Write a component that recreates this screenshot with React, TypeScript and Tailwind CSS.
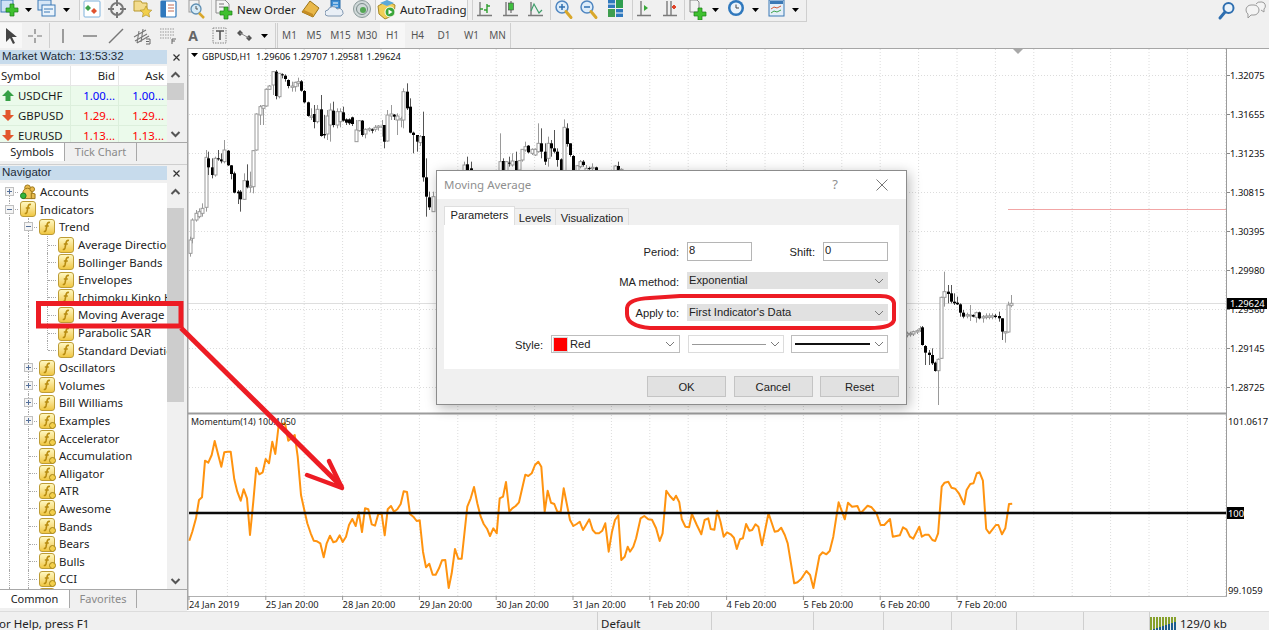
import React from "react";

type C = [number, number, number, number, number, number];

const seg6: C[] = [
  [14,590,600,640,650,0],[22,535,540,595,610,0],[32,510,520,540,545,0],[42,505,515,530,535,0],[52,490,505,520,530,0],[62,330,352,502,515,0],[70,335,355,382,405,1],[80,355,382,405,415,1],[90,350,355,405,410,0],[100,330,355,358,362,1],[109,340,358,364,370,1],[118,300,330,365,370,0],[128,330,332,376,378,1],[138,375,376,402,418,1],[148,395,400,458,460,1],[158,450,455,460,492,1],[166,450,455,478,515,1],[176,400,422,478,480,0],[186,373,422,442,445,1],[196,395,438,442,458,0],[205,330,332,440,460,0],[214,220,222,330,332,0],[224,195,200,225,255,0],[234,195,197,205,255,0],[244,145,148,198,200,0],[253,135,138,148,150,0],[263,95,95,135,165,0],[272,90,95,168,178,1],[281,100,100,170,175,0],[291,100,103,106,115,1],[300,103,107,117,125,1],[310,118,120,138,145,1],[320,125,138,142,155,0],[329,125,127,140,155,0],[340,113,125,130,140,0],[348,120,124,152,155,1],[358,150,153,187,190,1],[368,185,187,228,230,1],[378,205,228,232,240,0],[387,195,222,246,265,1],[397,195,208,245,250,0],[407,165,208,288,290,1],[417,225,282,286,295,1],[427,210,228,282,300,0],[436,190,210,255,305,0],[445,185,212,255,262,1],[455,205,215,255,265,0],[464,205,215,245,262,0],[474,200,217,242,245,1],[483,235,238,248,255,1],[492,235,238,250,255,1],[502,230,232,252,258,1],[512,240,270,305,305,0],[521,240,242,272,275,0],[531,240,242,285,290,1],[541,265,268,282,295,0],[551,262,266,270,275,0],[561,265,268,272,280,1],[570,255,262,268,275,0],[580,255,258,262,272,0],[590,240,258,262,290,0],[598,255,255,305,325,1],[607,210,225,303,305,0],[617,195,222,228,240,0],[627,222,224,230,240,1],[637,220,228,240,285,0],[647,230,236,240,262,0],[655,145,155,240,265,0],[665,130,155,205,210,1],[675,175,200,278,280,1],[685,275,278,285,340,1],[695,285,285,305,335,1],[704,285,290,308,318,0],[714,215,288,412,425,1],[723,355,412,470,530,1],[733,455,472,502,510,1],[743,455,470,515,515,0],
];
const seg10: C[] = [
  [102,155,165,185,185,0],[112,140,163,180,185,1],[122,155,175,185,185,1],[209,70,155,185,185,0],[219,145,153,185,185,1],[228,155,155,185,185,0],[238,140,158,161,170,1],[247,130,153,165,170,0],[257,125,153,180,180,1],[266,150,152,180,180,0],[276,118,118,150,155,0],[286,95,110,120,125,0],[295,105,107,127,130,1],[305,115,118,130,135,0],[315,115,118,135,138,0],[325,40,100,125,128,0],[334,55,100,125,145,1],[344,100,125,155,165,1],[353,80,100,145,170,0],[363,90,100,115,140,1],[373,60,115,125,130,1],[382,115,125,150,170,1],[392,145,148,185,185,1],[401,28,52,185,185,0],[411,40,55,102,110,1],[420,100,100,135,140,1],[430,135,138,180,185,1],[440,165,167,185,185,0],[449,150,155,170,175,0],[459,150,155,165,170,1],[468,165,175,185,185,0],[478,170,174,177,185,1],[487,160,172,176,185,0],[497,170,172,185,185,1],[545,180,182,185,185,0],[555,165,168,185,185,0],[564,155,168,185,185,1],[573,175,178,185,185,0],
];
const seg9: C[] = [
  [20,875,880,885,892,0],[30,875,880,884,890,0],[40,872,875,882,888,0],[50,868,872,876,882,0],[60,858,866,870,876,0],[67,858,862,915,917,1],[76,915,918,938,975,1],[86,930,938,945,975,1],[95,925,945,970,975,1],[105,965,968,993,995,1],[115,955,958,992,1095,0],[124,770,772,955,957,0],[133,695,755,772,800,0],[143,735,755,762,790,1],[152,735,760,785,790,1],[162,760,785,790,795,1],[172,770,788,793,795,1],[181,790,793,818,830,1],[190,810,818,830,835,1],[200,818,824,828,835,0],[210,795,825,828,843,0],[220,823,825,830,832,1],[229,815,818,832,848,0],[238,815,817,835,838,1],[248,825,830,834,848,0],[258,820,828,832,838,0],[267,820,828,832,838,0],[276,820,827,831,838,0],[286,822,827,831,835,1],[296,815,828,835,845,1],[305,835,835,875,900,1],[315,875,875,879,908,0],[324,785,795,876,878,0],[334,765,790,796,802,0],
];

const p7: [number, number][] = [[13,392],[22,365],[33,325],[42,270],[51,262],[60,152],[70,158],[80,135],[89,93],[99,132],[109,170],[118,127],[128,125],[137,125],[148,208],[157,245],[167,272],[176,238],[186,265],[195,375],[205,275],[214,173],[223,193],[233,187],[242,147],[252,160],[262,95],[271,132],[281,45],[300,40],[310,92],[320,85],[329,75],[338,140],[348,255],[358,300],[367,340],[377,370],[386,392],[396,394],[406,400],[416,442],[425,400],[435,377],[445,397],[454,394],[464,376],[473,396],[483,380],[492,345],[502,327],[512,348],[521,307],[531,366],[540,295],[550,298],[560,343],[570,347],[580,312],[590,312],[599,376],[608,298],[618,288],[627,305],[637,298],[647,282],[656,244],[666,246],[675,312],[685,320],[695,333],[704,331],[714,425],[723,472],[733,461],[743,494],[752,494],[762,475],[771,451],[781,450],[791,534],[800,490],[810,417],[820,446],[830,446],[847,290],[857,265],[867,231],[877,280],[887,320],[896,342],[906,356],[915,378],[925,355],[935,370],[944,265],[954,260],[963,216],[973,305],[982,295],[992,288],[1002,277],[1021,194],[1030,198],[1040,190],[1050,165],[1060,155],[1069,170],[1079,305],[1088,242],[1098,278],[1108,282],[1117,305],[1127,305],[1136,235],[1155,330],[1165,348],[1175,342],[1184,335],[1194,360],[1203,345],[1213,328],[1223,360],[1232,370],[1242,370],[1252,362],[1261,340],[1271,425],[1281,365],[1290,330],[1300,316],[1309,450],[1319,440],[1328,410]];
const p8: [number, number][] = [[0,425],[8,410],[15,385],[26,325],[35,318],[45,328],[54,329],[64,355],[73,393],[80,370],[89,242],[98,258],[107,270],[113,257],[121,277],[127,328],[136,350],[145,352],[152,312],[164,345],[175,373],[183,330],[192,325],[198,357],[207,359],[214,302],[222,335],[230,380],[238,367],[247,373],[255,383],[262,417],[270,388],[277,385],[285,342],[293,362],[300,360],[308,343],[315,350],[324,406],[340,310],[355,365],[363,363],[371,353],[380,375],[387,400],[403,520],[411,517],[420,507],[433,483],[442,495],[450,534],[465,437],[473,427],[482,433],[490,423],[499,380],[512,277],[527,328],[535,278],[545,290],[558,288],[566,310],[583,287],[593,292],[605,310],[615,345],[624,345],[638,327],[645,380],[662,376],[670,352],[678,358],[687,380],[695,386],[710,350],[716,380],[725,374],[733,374],[742,390],[749,393],[756,370],[765,230],[772,218],[781,215],[789,233],[798,236],[807,250],[820,283],[826,240],[835,222],[843,220],[851,190],[858,187],[866,212],[874,357],[882,370],[898,345],[904,345],[913,373],[921,355],[930,282],[938,281]];

const momentum = [
  ...p7.map(([x, y]) => `${(185 + x / 3).toFixed(1)},${(410 + y / 3).toFixed(1)}`),
  ...p8.map(([x, y]) => `${(630 + x / 2.454).toFixed(1)},${(410 + y / 3).toFixed(1)}`),
].join(" ");

const prices: [number, string][] = [[75,"1.32075"],[114,"1.31655"],[153,"1.31235"],[192,"1.30815"],[231,"1.30395"],[270,"1.29980"],[309,"1.29560"],[348,"1.29145"],[387,"1.28725"]];
const dates = ["24 Jan 2019","25 Jan 20:00","28 Jan 20:00","29 Jan 20:00","30 Jan 20:00","31 Jan 20:00","1 Feb 20:00","4 Feb 20:00","5 Feb 20:00","6 Feb 20:00","7 Feb 20:00"];

function Candles({ data, ox, oy }: { data: C[]; ox: number; oy: number }) {
  return (
    <>
      {data.map(([zx, hi, top, bot, lo, black], i) => {
        const x = Math.round(ox + zx / 3) + 0.5;
        const t = oy + top / 3;
        const b = oy + bot / 3;
        return (
          <g key={i}>
            <line x1={x} x2={x} y1={oy + hi / 3} y2={oy + lo / 3} stroke={black ? "#555" : "#9a9a9a"} />
            {black ? (
              <rect x={x - 1.5} y={t} width={3} height={Math.max(b - t, 1)} fill="#000" />
            ) : (
              <rect x={x - 1.5} y={t} width={3} height={Math.max(b - t, 1)} fill="#fff" stroke="#9a9a9a" strokeWidth={1} />
            )}
          </g>
        );
      })}
    </>
  );
}

function Chart() {
  const verts = Array.from({ length: 27 }, (_, i) => 189 + 38.4 * (i + 1));
  return (
    <svg viewBox="187 48 1082 563" width={1082} height={563} className="block font-['Noto_Sans',sans-serif]">
      <rect x={187} y={48} width={1082} height={563} fill="#fff" />
      {verts.map((x, i) => (
        <g key={i} stroke="#dcdcdc" strokeDasharray="1 2">
          <line x1={x} x2={x} y1={49} y2={412} />
          <line x1={x} x2={x} y1={415} y2={596} />
        </g>
      ))}
      {prices.map(([y]) => (
        <line key={y} x1={189} x2={1226} y1={y + 0.5} y2={y + 0.5} stroke="#dcdcdc" strokeDasharray="1 2" />
      ))}
      <line x1={188} x2={1226} y1={303.5} y2={303.5} stroke="#dedede" />
      <line x1={1008} x2={1226} y1={209.5} y2={209.5} stroke="#f2a6a6" />
      <Candles data={seg6} ox={185} oy={40} />
      <Candles data={seg10} ox={430} oy={110} />
      <Candles data={seg9} ox={900} oy={40} />
      <path d="M1013 49h10l-5 5z" fill="#a8a8a8" />
      <path d="M191 53h7l-3.5 4z" fill="#000" />
      <text x={202} y={59.5} fontSize={8.9} fill="#111">GBPUSD,H1</text>
      <text x={256} y={59.5} fontSize={9.3} fill="#111">1.29606 1.29707 1.29581 1.29624</text>

      <line x1={187.5} x2={187.5} y1={48} y2={610} stroke="#a6a6a6" strokeWidth={2} />
      <line x1={187} x2={1269} y1={48} y2={48} stroke="#a6a6a6" strokeWidth={2} />
      <line x1={1226.5} x2={1226.5} y1={48} y2={596} stroke="#9c9c9c" />
      <line x1={188} x2={1226} y1={413.5} y2={413.5} stroke="#9c9c9c" strokeWidth={2} />
      <line x1={188} x2={1227} y1={596.5} y2={596.5} stroke="#b0b0b0" />
      {prices.map(([y, t]) => (
        <g key={t}>
          <line x1={1227} x2={1230} y1={y + 0.5} y2={y + 0.5} stroke="#888" />
          <text x={1230} y={y + 4} fontSize={9.4} fill="#111">{t}</text>
        </g>
      ))}
      <rect x={1227} y={298} width={40} height={11} fill="#000" />
      <text x={1230} y={307} fontSize={9.4} fill="#fff">1.29624</text>

      <polyline points={momentum} fill="none" stroke="#ff930f" strokeWidth={2} strokeLinejoin="round" />
      <line x1={189} x2={1226} y1={513} y2={513} stroke="#0b0b0b" strokeWidth={2.4} />
      <text x={191} y={425} fontSize={8.9} fill="#222">Momentum(14) 100.1050</text>
      <text x={1228} y={425} fontSize={9.4} fill="#111">101.0617</text>
      <text x={1228} y={594} fontSize={9.4} fill="#111">99.1059</text>
      <rect x={1227} y={507} width={17} height={12} fill="#000" />
      <text x={1228} y={517} fontSize={9.4} fill="#fff">100</text>
      {dates.map((d, i) => (
        <g key={d}>
          <line x1={189 + 76.8 * i} x2={189 + 76.8 * i} y1={596} y2={600} stroke="#999" />
          <text x={189 + 76.8 * i} y={608} fontSize={9.3} fill="#222">{d}</text>
        </g>
      ))}
    </svg>
  );
}

function Cell({ c, children }: { c: string; children?: React.ReactNode }) {
  return <div className={`flex items-center justify-center shrink-0 h-full ${c}`}>{children}</div>;
}
const Sep = () => <div className="w-px h-full bg-[#cfcfcf] shrink-0" />;
const Drop = () => (
  <svg width={7} height={4} viewBox="0 0 7 4"><path d="M0 0h7L3.5 4z" fill="#000" /></svg>
);
function Ico({ children }: { children: React.ReactNode }) {
  return <svg width={20} height={20} viewBox="0 0 20 20" className="block shrink-0">{children}</svg>;
}
const Plus = ({ x = 7, y = 7 }: { x?: number; y?: number }) => (
  <path transform={`translate(${x} ${y})`} d="M4 0h4v4h4v4H8v4H4V8H0V4h4z" fill="#3fc02f" stroke="#1b7f17" strokeWidth={0.7} />
);
const BarIco = ({ candle }: { candle?: boolean }) => (
  <Ico>
    <path d="M5 2v14M2 15.5h15" stroke="#7a7a7a" strokeWidth={1.4} fill="none" />
    {candle ? (
      <>
        <path d="M10 1v12" stroke="#555" />
        <rect x={7.5} y={3} width={5} height={7} fill="#3fbf3f" stroke="#444" strokeWidth={0.6} />
      </>
    ) : (
      <path d="M5 9h3M12 4v9M9 10h3M12 6h3" stroke="#2f9e2f" strokeWidth={1.4} fill="none" />
    )}
  </Ico>
);
const ZoomIco = ({ plus }: { plus?: boolean }) => (
  <Ico>
    <circle cx={8} cy={7} r={6} fill="#dcecfa" stroke="#4f86c0" strokeWidth={1.5} />
    <path d="M12 11.5l5 6" stroke="#d9a72b" strokeWidth={3} strokeLinecap="round" />
    <path d={plus ? "M5 7h6M8 4v6" : "M5 7h6"} stroke="#2f6fb0" strokeWidth={1.5} />
  </Ico>
);

function Toolbar1() {
  return (
    <div className="flex h-[22px] shrink-0">
      <div className="flex w-[807px] h-full overflow-hidden border-b border-r border-[#cfcfcf] items-start">
        <div className="flex h-[21px] items-center -mt-[1px]">
          <Cell c="w-[20px]"><Ico><rect x={1} y={0} width={12} height={12} fill="#cfe2f5" stroke="#3a78b5" /><Plus x={6} y={4} /></Ico></Cell>
          <Cell c="w-[16px]"><Drop /></Cell>
          <Cell c="w-[21px]"><Ico><rect x={1} y={0} width={13} height={10} fill="#d6e6f6" stroke="#3a78b5" /><rect x={5} y={5} width={13} height={11} fill="#eaf3fb" stroke="#3a78b5" /><path d="M7 9h9M7 12h6" stroke="#3a78b5" /></Ico></Cell>
          <Cell c="w-[19px]"><Drop /></Cell>
          <Cell c="w-[3px]" />
          <Sep />
          <Cell c="w-[24px] bg-[#f8f8f8]"><Ico><rect x={2} y={1} width={16} height={16} rx={1} fill="#fff" stroke="#7fb2dc" /><path d="M6 5l3 3-3 3-3-3z" fill="#3fa34d" /><path d="M12 8l3 3-3 3-3-3z" fill="#e0522f" /></Ico></Cell>
          <Cell c="w-[26px]"><Ico><circle cx={10} cy={9} r={6} fill="none" stroke="#777" strokeWidth={2} /><path d="M10 0v6M10 12v6M1 9h6M13 9h6" stroke="#777" strokeWidth={2} /></Ico></Cell>
          <Cell c="w-[26px]"><Ico><path d="M1 1h7l1 2h5v8H1z" fill="#f3dc8e" stroke="#b8982f" /><path d="M13 6l1.8 3.7 4 .5-3 2.8.8 4-3.6-2-3.6 2 .8-4-3-2.8 4-.5z" fill="#f2cf4b" stroke="#a88a22" strokeWidth={0.6} /></Ico></Cell>
          <Cell c="w-[25px]"><Ico><rect x={2} y={1} width={15} height={16} rx={1} fill="#fff" stroke="#2f78bd" strokeWidth={1.2} /><rect x={2} y={1} width={5} height={16} fill="#2f78bd" /><path d="M9 5h6M9 8h6M9 11h6" stroke="#c06b55" /></Ico></Cell>
          <Cell c="w-[29px]"><Ico><rect x={3} y={0} width={10} height={12} fill="#f2f2f2" stroke="#999" /><circle cx={10} cy={9} r={5} fill="#d6ebf7" stroke="#5f8fb2" strokeWidth={1.3} /><path d="M13 13l5 5" stroke="#d9a72b" strokeWidth={2.5} /><path d="M10 6v3h2" stroke="#555" fill="none" /></Ico></Cell>
          <Cell c="w-px" />
          <Sep />
          <div className="flex items-center w-[88px] h-full pl-[1px] shrink-0">
            <Ico><path d="M3 0h9l4 4v9H3z" fill="#f5f5f5" stroke="#8a8a8a" /><path d="M6 4h5M6 7h5" stroke="#777" /><Plus x={7} y={7} /></Ico>
            <span className="ml-[4px] text-[11.5px] text-[#222] whitespace-nowrap">New Order</span>
          </div>
          <Cell c="w-[20px]"><Ico><path d="M10 1l9 7-6 9-11-5z" fill="#e9b84a" stroke="#9a7418" /><path d="M2 12l11 5v-3L4 10z" fill="#c68d24" /></Ico></Cell>
          <Cell c="w-[2px]" />
          <Cell c="w-[26px]"><Ico><rect x={6} y={0} width={9} height={10} fill="#3d8fd6" stroke="#2a6aa5" /><path d="M8 3h5M8 6h5" stroke="#fff" /><path d="M3 16a3 3 0 010-6 5 5 0 019-1 4 4 0 014 7z" fill="#e9eff6" stroke="#8097b0" /></Ico></Cell>
          <Cell c="w-px" />
          <Cell c="w-[25px]"><Ico><circle cx={10} cy={9} r={8.5} fill="#cfd8d8" stroke="#8b9a9a" /><circle cx={10} cy={9} r={5.5} fill="none" stroke="#7a8a8a" /><circle cx={11} cy={10} r={3} fill="#53a653" /></Ico></Cell>
          <Cell c="w-px" />
          <Sep />
          <div className="flex items-center w-[91px] h-full bg-[#f6f6f6] pl-[1px] shrink-0">
            <Ico><path d="M1 6l9-5 8 4-1 10-9 4-6-5z" fill="#f0cf58" stroke="#a5882a" /><path d="M3 3l7-3 7 3-7 3z" fill="#5aa9d8" /><circle cx={13} cy={12} r={5} fill="#3aa63a" stroke="#fff" /><path d="M11.5 9.5l4 2.5-4 2.5z" fill="#fff" /></Ico>
            <span className="ml-[3px] text-[11.5px] text-[#222] whitespace-nowrap">AutoTrading</span>
          </div>
          <Sep />
          <Cell c="w-[4px]" />
          <Sep />
          <Cell c="w-[24px]"><BarIco /></Cell>
          <Cell c="w-[27px]"><BarIco candle /></Cell>
          <Cell c="w-[24px]"><Ico><path d="M5 2v14M2 15.5h15" stroke="#7a7a7a" strokeWidth={1.4} fill="none" /><path d="M5 11l3-7 5 9 3-3" stroke="#3f9e6a" strokeWidth={1.2} fill="none" /></Ico></Cell>
          <Cell c="w-[2px]" />
          <Sep />
          <Cell c="w-[25px]"><ZoomIco plus /></Cell>
          <Cell c="w-[26px]"><ZoomIco /></Cell>
          <Cell c="w-[28px]"><Ico><rect x={2} y={0} width={7} height={8} fill="#2f78bd" /><rect x={10} y={0} width={7} height={8} fill="#2f9e4f" /><rect x={2} y={9} width={7} height={8} fill="#3f9e4f" /><rect x={10} y={9} width={7} height={8} fill="#2f78bd" /><path d="M2 4h7M10 13h7" stroke="#fff" /></Ico></Cell>
          <Cell c="w-[2px]" />
          <Sep />
          <Cell c="w-[24px]"><Ico><path d="M6 1v15M2 15.5h14" stroke="#7a7a7a" strokeWidth={1.4} fill="none" /><path d="M9 5l4 3-4 3z" fill="#37a837" /></Ico></Cell>
          <Cell c="w-[27px]"><Ico><path d="M6 1v15M2 15.5h14M10 1v14" stroke="#7a7a7a" strokeWidth={1.4} fill="none" /><path d="M11 7h4M13 5v4" stroke="#e0442a" strokeWidth={2} /></Ico></Cell>
          <Sep />
          <Cell c="w-[24px]"><Ico><path d="M3 0h7l2 2v10H3z" fill="#f2f2f2" stroke="#888" /><Plus x={7} y={8} /></Ico></Cell>
          <Cell c="w-[13px]"><Drop /></Cell>
          <Cell c="w-[27px]"><Ico><circle cx={10} cy={8} r={8} fill="#2f78bd" /><circle cx={10} cy={8} r={5.5} fill="#eaf3fb" /><path d="M10 4.5V8h3" stroke="#444" fill="none" /></Ico></Cell>
          <Cell c="w-[12px]"><Drop /></Cell>
          <Cell c="w-[3px]" />
          <Cell c="w-[26px]"><Ico><rect x={2} y={0} width={15} height={16} fill="#e4eff8" stroke="#3a78b5" /><rect x={3} y={1} width={13} height={3} fill="#3a78b5" /><path d="M4 9l3-2 3 1 4-2" stroke="#d55a3a" fill="none" /><path d="M4 13l3-2 3 1 4-2" stroke="#3fa34d" fill="none" /></Ico></Cell>
          <Cell c="w-[11px]"><Drop /></Cell>
        </div>
      </div>
      <div className="flex-1 flex items-center justify-end h-[21px] pr-[3px] gap-[8px]">
        <Ico><circle cx={11.5} cy={7} r={5} fill="#eaf3fb" stroke="#2f6fb0" strokeWidth={2} /><path d="M8 11l-5 6" stroke="#2f6fb0" strokeWidth={3} strokeLinecap="round" /></Ico>
        <svg width={21} height={20} viewBox="0 0 21 20" className="shrink-0"><path d="M1 9a5 5 0 015-5h3a5 5 0 010 10H6l-3 3v-4a5 5 0 01-2-4z" fill="#f4f4f4" stroke="#999" /><path d="M11 3a5 5 0 015-2h1a4 4 0 012 7v3l-3-2" fill="#f4f4f4" stroke="#999" /></svg>
      </div>
    </div>
  );
}

function P({ c, t }: { c: string; t: string }) {
  return <Cell c={c}><span className="text-[10px] text-[#555]">{t}</span></Cell>;
}

function Toolbar2() {
  return (
    <div className="flex h-[26px] shrink-0 pt-[1px]">
      <div className="flex w-[511px] h-full items-center border-r border-[#cfcfcf]">
        <Cell c="w-[22px] bg-[#f7f7f7]"><Ico><path d="M5 2v14l4-4 3 6 2-1-3-6h5z" fill="#444" /></Ico></Cell>
        <Cell c="w-[26px]"><Ico><path d="M10 3v5M10 12v5M3 10h5M12 10h5" stroke="#777" strokeWidth={1.2} /></Ico></Cell>
        <Cell c="w-px" />
        <Sep />
        <Cell c="w-[26px]"><Ico><path d="M10 3v14" stroke="#777" strokeWidth={1.4} /></Ico></Cell>
        <Cell c="w-[27px]"><Ico><path d="M3 10h14" stroke="#777" strokeWidth={1.4} /></Ico></Cell>
        <Cell c="w-[26px]"><Ico><path d="M3 17L17 3" stroke="#777" strokeWidth={1.4} /></Ico></Cell>
        <Cell c="w-[26px]"><Ico><path d="M2 11l12-7M3 15l12-7M5 17l12-7M7 5l-2 12M11 3l-2 13" stroke="#777" strokeWidth={1.1} /><path d="M14 13h4v5h-4M14 15.5h3" stroke="#666" fill="none" /></Ico></Cell>
        <Cell c="w-[25px]"><Ico><path d="M2 3h15M2 6h15M2 9h15M2 12h11" stroke="#999" strokeDasharray="1.5 1" /><path d="M14 13h4M14 13v5M14 15h3" stroke="#666" fill="none" /></Ico></Cell>
        <Cell c="w-[26px]"><span className="text-[14px] font-bold text-[#666]">A</span></Cell>
        <Cell c="w-[27px]"><Ico><rect x={3} y={2} width={13} height={15} fill="none" stroke="#888" strokeDasharray="1.5 1" /><path d="M6 5h8M10 5v9" stroke="#555" strokeWidth={1.6} /></Ico></Cell>
        <Cell c="w-[23px]"><Ico><path d="M5 4l3 3-3 3-3-3zM14 9l3 3-3 3-3-3z" fill="#555" /><path d="M5 7l9 5" stroke="#888" /></Ico></Cell>
        <Cell c="w-[16px]"><Drop /></Cell>
        <Cell c="w-[3px]" />
        <Sep />
        <Cell c="w-px" />
        <Sep />
        <P c="w-[23px]" t="M1" />
        <P c="w-[26px]" t="M5" />
        <P c="w-[27px]" t="M15" />
        <P c="w-[26px]" t="M30" />
        <P c="w-[25px] bg-[#f7f7f7]" t="H1" />
        <P c="w-[25px]" t="H4" />
        <P c="w-[28px]" t="D1" />
        <P c="w-[27px]" t="W1" />
        <P c="w-[25px]" t="MN" />
      </div>
    </div>
  );
}

const CloseX = () => (
  <svg width={9} height={9} viewBox="0 0 9 9"><path d="M1.5 1.5l6 6M7.5 1.5l-6 6" stroke="#333" strokeWidth={1.2} /></svg>
);
const Chev = ({ up }: { up?: boolean }) => (
  <svg width={11} height={8} viewBox="0 0 11 8"><path d={up ? "M1.5 6L5.5 2l4 4" : "M1.5 2l4 4 4-4"} fill="none" stroke="#555" strokeWidth={2} /></svg>
);

function TitleBar({ t }: { t: string }) {
  return (
    <div className="flex h-[14px] shrink-0">
      <div className="w-[167px] bg-[#c7dbec] flex items-center pl-[2px] font-['Liberation_Sans',sans-serif] text-[11.5px] text-[#1d2b38] whitespace-nowrap">{t}</div>
      <div className="flex-1 flex items-center justify-center pr-[2px]"><CloseX /></div>
    </div>
  );
}

function MarketRow({ sym, up, v, c }: { sym: string; up?: boolean; v: string; c: string }) {
  return (
    <div className="grid grid-cols-[71px_48px_48px] h-[20px] shrink-0 bg-[#ebfaeb] border-b border-[#dcefdc] items-center text-[11.4px]">
      <div className="flex items-center pl-[2px] h-full border-r border-[#dcefdc]">
        <svg width={12} height={11} viewBox="0 0 12 11" className="shrink-0">
          {up ? <path d="M6 0l6 6H8.5v5h-5V6H0z" fill="#35a045" /> : <path d="M6 11L0 5h3.5V0h5v5H12z" fill="#e2562c" />}
        </svg>
        <span className="ml-[4px] text-[#1a1a1a]">{sym}</span>
      </div>
      <div className={`text-right pr-[3px] border-r border-[#dcefdc] h-full leading-[19px] ${c}`}>{v}</div>
      <div className={`text-right pr-[3px] h-full leading-[19px] ${c}`}>{v}</div>
    </div>
  );
}

function MarketWatch() {
  return (
    <div className="flex flex-col h-[117px] shrink-0 pt-[2px] border-b border-[#cfcfcf]">
      <TitleBar t="Market Watch: 13:53:32" />
      <div className="flex h-[76px] shrink-0 mt-[2px] overflow-hidden">
        <div className="w-[167px] flex flex-col">
          <div className="grid grid-cols-[71px_48px_48px] h-[20px] shrink-0 bg-white text-[11.4px] text-[#222] items-center border-b border-[#e6e6e6]">
            <div className="pl-[1px] h-full leading-[19px] border-r border-[#e6e6e6]">Symbol</div>
            <div className="text-right pr-[3px] h-full leading-[19px] border-r border-[#e6e6e6]">Bid</div>
            <div className="text-right pr-[3px] h-full leading-[19px]">Ask</div>
          </div>
          <MarketRow sym="USDCHF" up v="1.00..." c="text-[#0000ff]" />
          <MarketRow sym="GBPUSD" v="1.29..." c="text-[#ff0000]" />
          <MarketRow sym="EURUSD" v="1.13..." c="text-[#ff0000]" />
        </div>
        <div className="w-[17px] bg-[#f0f0f0] flex flex-col items-center">
          <div className="h-[17px] flex items-center justify-center"><Chev up /></div>
          <div className="w-full h-[17px] bg-[#cdcdcd]" />
          <div className="flex-1" />
          <div className="h-[17px] flex items-center justify-center"><Chev /></div>
        </div>
      </div>
      <Tabs a="Symbols" b="Tick Chart" wa="w-[65px]" wb="w-[72px]" />
    </div>
  );
}

function Tabs({ a, b, wa, wb }: { a: string; b: string; wa: string; wb: string }) {
  return (
    <div className="flex h-[19px] shrink-0 border-t border-[#a8a8a8] text-[11px]">
      <div className={`${wa} bg-white text-center text-[#222] border-r border-[#a8a8a8] leading-[18px]`}>{a}</div>
      <div className={`${wb} text-center text-[#8a8a8a] border-r border-[#a8a8a8] leading-[18px]`}>{b}</div>
    </div>
  );
}

function Fx({ script }: { script?: boolean }) {
  return (
    <div className="relative w-[16px] h-[16px] shrink-0 rounded-[3px] border border-[#bd9c36] bg-gradient-to-b from-[#fff8bf] to-[#f0c73f] flex items-center justify-center">
      <svg width={12} height={12} viewBox="0 0 12 12">
        <path d="M9 1.5C7 1 6.4 2 6 4l-1 5c-.3 1.2-1 1.7-2.2 1.3M3.8 5h4" fill="none" stroke="#b88c10" strokeWidth={1.6} />
      </svg>
      {script && <div className="absolute right-[-2px] bottom-[-1px] w-[7px] h-[7px] rounded-full bg-[#f3cf4c] border border-[#a58418]" />}
    </div>
  );
}
const AccountIco = () => (
  <svg width={16} height={16} viewBox="0 0 17 16" className="shrink-0">
    <circle cx={8} cy={3.5} r={3} fill="#e8b94a" stroke="#9a7418" />
    <path d="M3 15V9a5 5 0 0110 0v6z" fill="#eec65a" stroke="#9a7418" />
    <circle cx={13} cy={5} r={2.5} fill="#e8b94a" stroke="#9a7418" />
    <path d="M12 15V9l4 1v5z" fill="#e6bb50" stroke="#9a7418" />
    <circle cx={3.5} cy={12} r={3} fill="#35b53a" stroke="#1c7d20" />
  </svg>
);

function Guide({ line = true, branch, half }: { line?: boolean; branch?: boolean; half?: boolean }) {
  return (
    <div className="relative w-[19px] h-full shrink-0">
      {line && <span className={`absolute left-[9px] top-0 border-l border-dotted border-[#a8a8a8] ${half ? "h-1/2" : "h-full"}`} />}
      {branch && <span className="absolute left-[10px] top-1/2 w-[8px] border-t border-dotted border-[#a8a8a8]" />}
    </div>
  );
}
function Exp({ open, line = true, noTop }: { open?: boolean; line?: boolean; noTop?: boolean }) {
  return (
    <div className="relative w-[19px] h-full shrink-0">
      {line && <span className={`absolute left-[9px] border-l border-dotted border-[#a8a8a8] ${noTop ? "top-1/2 h-1/2" : "top-0 h-full"}`} />}
      <span className="absolute left-[10px] top-1/2 w-[8px] border-t border-dotted border-[#a8a8a8]" />
      <div className="absolute left-[5px] top-[4px] w-[9px] h-[9px] bg-[#f5f5f5] border border-[#c0c0c0] flex items-center justify-center">
        <svg width={7} height={7} viewBox="0 0 7 7"><path d={open ? "M1 3.5h5" : "M1 3.5h5M3.5 1v5"} stroke="#55709a" /></svg>
      </div>
    </div>
  );
}

function Row({ guides, icon, label }: { guides: React.ReactNode; icon: React.ReactNode; label: string }) {
  return (
    <div className="flex items-center h-[17.6px] shrink-0 whitespace-nowrap text-[11.4px] text-[#222]">
      {guides}
      <div className="ml-[1px]">{icon}</div>
      <span className="ml-[4px]">{label}</span>
    </div>
  );
}

const trendKids = ["Average Directional Movement Index", "Bollinger Bands", "Envelopes", "Ichimoku Kinko Hyo", "Moving Average", "Parabolic SAR", "Standard Deviation"];
const folders = ["Oscillators", "Volumes", "Bill Williams", "Examples"];
const scripts = ["Accelerator", "Accumulation", "Alligator", "ATR", "Awesome", "Bands", "Bears", "Bulls", "CCI", "DeMarker"];

function Navigator() {
  return (
    <div className="flex flex-col flex-1 min-h-0 pt-[1px]">
      <TitleBar t="Navigator" />
      <div className="flex h-[406px] shrink-0 mt-[3px] overflow-hidden">
        <div className="w-[167px] flex flex-col overflow-hidden bg-white">
          <Row guides={<Exp noTop />} icon={<AccountIco />} label="Accounts" />
          <Row guides={<Exp open />} icon={<Fx />} label="Indicators" />
          <Row guides={<><Guide /><Exp open line /></>} icon={<Fx />} label="Trend" />
          {trendKids.map((k, i) => (
            <Row key={k} guides={<><Guide /><Guide /><Guide branch half={i === trendKids.length - 1} /></>} icon={<Fx />} label={k} />
          ))}
          {folders.map((k) => (
            <Row key={k} guides={<><Guide /><Exp /></>} icon={<Fx script={k === "Examples"} />} label={k} />
          ))}
          {scripts.map((k) => (
            <Row key={k} guides={<><Guide /><Guide branch /></>} icon={<Fx script />} label={k} />
          ))}
        </div>
        <div className="w-[17px] bg-[#f0f0f0] flex flex-col items-center">
          <div className="h-[17px] flex items-center justify-center"><Chev up /></div>
          <div className="h-[8px]" />
          <div className="w-full h-[194px] bg-[#cdcdcd]" />
          <div className="flex-1" />
          <div className="h-[17px] flex items-center justify-center"><Chev /></div>
        </div>
      </div>
      <Tabs a="Common" b="Favorites" wa="w-[70px]" wb="w-[67px]" />
    </div>
  );
}

const DChev = () => (
  <svg width={10} height={6} viewBox="0 0 10 6"><path d="M1 1l4 4 4-4" fill="none" stroke="#7a7a7a" /></svg>
);
function Select({ t }: { t: string }) {
  return (
    <div className="ml-[8px] w-[201px] h-[17px] bg-[#e1e1e1] flex items-center pl-[2px] pr-[4px] justify-between">
      <span>{t}</span>
      <DChev />
    </div>
  );
}
function Input({ t }: { t: string }) {
  return <div className="ml-[8px] w-[65px] h-[19px] bg-white border border-[#b5b5b5] pl-[1px] leading-[14px]">{t}</div>;
}
function Btn({ t }: { t: string }) {
  return <div className="w-[79px] h-[21px] bg-[#e1e1e1] border border-[#c4c4c4] flex items-center justify-center pt-px">{t}</div>;
}

function Dialog() {
  return (
    <div className="absolute left-[436px] top-[170px] w-[471px] h-[235px] border border-[#8c8c8c] bg-[#f0f0f0] shadow-[2px_3px_12px_rgba(0,0,0,0.28)] font-['Liberation_Sans',sans-serif] text-[11.2px] text-[#222]">
      <div className="h-[28px] bg-white flex items-center pl-[7px] font-['Noto_Sans',sans-serif] text-[11.5px] text-[#8f8f8f]">
        <span className="flex-1">Moving Average</span>
        <span className="mr-[38px] text-[13px]">?</span>
        <svg width={12} height={12} viewBox="0 0 12 12" className="mr-[18px]"><path d="M.5.5l11 11M11.5.5l-11 11" stroke="#777" /></svg>
      </div>
      <div className="flex items-end h-[26px] pl-[7px]">
        <div className="w-[71px] h-[19px] bg-white text-center leading-[17px] border-t border-x border-[#dedede]">Parameters</div>
        <div className="w-[41px] h-[17px] bg-[#f0f0f0] text-center leading-[18px] border-t border-r border-[#dedede]">Levels</div>
        <div className="w-[73px] h-[17px] bg-[#f0f0f0] text-center leading-[18px] border-t border-r border-[#dedede]">Visualization</div>
      </div>
      <div className="ml-[7px] w-[455px] h-[144px] bg-white pt-[17px] flex flex-col">
        <div className="flex items-center h-[19px]">
          <div className="w-[235px] text-right pt-[2px]">Period:</div>
          <Input t="8" />
          <div className="w-[63px] text-right pt-[2px]">Shift:</div>
          <Input t="0" />
        </div>
        <div className="flex items-center h-[17px] mt-[11px]">
          <div className="w-[235px] text-right pt-[3px]">MA method:</div>
          <Select t="Exponential" />
        </div>
        <div className="flex items-center h-[17px] mt-[15px]">
          <div className="w-[235px] text-right pt-[2px]">Apply to:</div>
          <Select t="First Indicator's Data" />
        </div>
        <div className="flex items-center h-[18px] mt-[14px]">
          <div className="w-[99px] text-right pt-[2px]">Style:</div>
          <div className="ml-[8px] w-[129px] h-[18px] border border-[#bdbdbd] flex items-center pr-[4px]">
            <div className="w-[15px] h-[15px] bg-[#ff0000] ml-[1px] border border-[#d9d9d9]" />
            <span className="ml-[2px] flex-1">Red</span>
            <DChev />
          </div>
          <div className="ml-[8px] w-[96px] h-[18px] border border-[#dcdcdc] flex items-center px-[3px] gap-[4px]">
            <div className="flex-1 h-px bg-[#999]" />
            <DChev />
          </div>
          <div className="ml-[7px] w-[97px] h-[18px] border border-[#bdbdbd] flex items-center px-[3px] gap-[4px]">
            <div className="flex-1 h-[2px] bg-[#111]" />
            <DChev />
          </div>
        </div>
      </div>
      <div className="flex justify-end gap-[7.5px] pr-[7px] mt-[7px]">
        <Btn t="OK" />
        <Btn t="Cancel" />
        <Btn t="Reset" />
      </div>
    </div>
  );
}

function Annotations() {
  return (
    <svg width={1269} height={630} viewBox="0 0 1269 630" className="absolute left-0 top-0 pointer-events-none">
      <rect x={38.5} y={303.5} width={142.5} height={22.5} fill="none" stroke="#ed1c24" strokeWidth={5} />
      <path d="M181 328L342 487" stroke="#ed1c24" strokeWidth={5} fill="none" />
      <path d="M307 475L342 488L329 461" stroke="#ed1c24" strokeWidth={4.5} fill="none" strokeLinecap="round" strokeLinejoin="round" />
      <path d="M650 298L680 296L880 296Q893 296 894 303L894 320Q892 328 870 328L650 328Q627 326 627 314L627 308Q628 299 650 298Z" fill="none" stroke="#ed1c24" strokeWidth={4} />
    </svg>
  );
}

function StatusBar() {
  return (
    <div className="flex h-[19px] shrink-0 overflow-hidden border-t border-[#dcdcdc] text-[11.5px] text-[#222]">
      <div className="w-[604px] -ml-[7px] pt-[3px] whitespace-nowrap shrink-0">For Help, press F1</div>
      <div className="w-[114px] shrink-0 border-l border-[#cfcfcf] pl-[3px] pt-[3px]">Default</div>
      <div className="w-[102px] shrink-0 border-l border-[#cfcfcf]" />
      <div className="w-[70px] shrink-0 border-l border-[#cfcfcf]" />
      <div className="w-[68px] shrink-0 border-l border-[#cfcfcf]" />
      <div className="w-[65px] shrink-0 border-l border-[#cfcfcf]" />
      <div className="w-[67px] shrink-0 border-l border-[#cfcfcf]" />
      <div className="w-[66px] shrink-0 border-l border-[#cfcfcf]" />
      <div className="flex items-start pt-[5px] border-l border-[#cfcfcf]">
        <svg width={26} height={14} viewBox="0 0 26 14" className="block">
          {Array.from({ length: 9 }, (_, i) => (
            <g key={i}>
              <rect x={i * 3} y={0} width={2} height={14 - (i + 1)} fill="#86a02c" />
              <rect x={i * 3} y={14 - (i + 1)} width={2} height={i + 1} fill="#1d5c8c" />
            </g>
          ))}
        </svg>
        <span className="ml-[4px] -mt-[2px] whitespace-nowrap">129/0 kb</span>
      </div>
    </div>
  );
}

export default function App() {
  return (
    <div className="relative flex flex-col w-[1269px] h-[630px] overflow-hidden bg-[#f0f0f0] font-['Noto_Sans',sans-serif]">
      <Toolbar1 />
      <Toolbar2 />
      <div className="flex h-[563px] shrink-0">
        <div className="w-[187px] shrink-0 flex flex-col">
          <MarketWatch />
          <Navigator />
        </div>
        <Chart />
      </div>
      <StatusBar />
      <Dialog />
      <Annotations />
    </div>
  );
}
